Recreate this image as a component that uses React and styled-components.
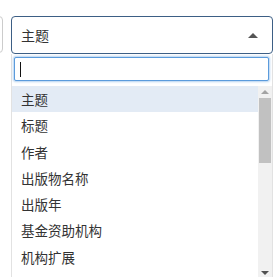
import React from 'react';
import styled, { createGlobalStyle } from 'styled-components';

const GlobalStyle = createGlobalStyle`
  html, body {
    margin: 0;
    padding: 0;
    background: #fff;
    overflow: hidden;
    font-family: "Noto Sans CJK SC", "Noto Sans", sans-serif;
  }
`;

const Page = styled.div`
  padding-top: 16px;
  width: 280px;
  height: 277px;
  box-sizing: border-box;
  overflow: hidden;
`;

const FieldRow = styled.div`
  display: flex;
  gap: 8px;
  margin-left: -60px;
  margin-right: 7px;
`;

// 왼쪽에 잘려서 보이는 이전 필드
const PrevField = styled.div`
  width: 63px;
  height: 37px;
  border: 1px solid #ccc;
  border-radius: 4px;
  box-sizing: border-box;
`;

const SelectWrap = styled.div`
  position: relative;
  flex: 1;
`;

const SelectBox = styled.div`
  display: flex;
  align-items: center;
  justify-content: space-between;
  height: 38px;
  box-sizing: border-box;
  padding: 0 14px 0 9px;
  border: 1px solid #3d5f85;
  border-radius: 4px;
  color: #333;
  font-size: 14px;
`;

const Arrow = styled.span`
  width: 0;
  height: 0;
  border-left: 5px solid transparent;
  border-right: 5px solid transparent;
  border-bottom: 5px solid #555;
`;

const Dropdown = styled.div`
  position: absolute;
  top: 38px;
  left: 0;
  right: 0;
  background: #fff;
  border: 1px solid #e2e2e2;
  border-top: none;
  box-sizing: border-box;
`;

const SearchArea = styled.div`
  position: relative;
  padding: 3px 3px 5px 2px;
`;

const SearchInput = styled.input`
  display: block;
  width: 100%;
  height: 24px;
  box-sizing: border-box;
  border: 1px solid #5b9bdc;
  border-radius: 2px;
  box-shadow: 0 0 2px 1px rgba(91, 155, 220, 0.45);
  outline: none;
  font-size: 14px;
  padding: 0 6px;
`;

const Caret = styled.span`
  position: absolute;
  left: 8px;
  top: 8px;
  width: 1px;
  height: 15px;
  background: #111;
`;

const ResultsArea = styled.div`
  display: flex;
  height: 193px;
`;

const Results = styled.ul`
  flex: 1;
  list-style: none;
  margin: 0;
  padding: 0;
  overflow: hidden;
`;

const Option = styled.li`
  height: 26.3px;
  line-height: 26.3px;
  padding: 0 9px;
  font-size: 13.5px;
  color: #333;
  background: ${(props) => (props.active ? '#e3ebf5' : '#fff')};
  white-space: nowrap;
`;

// 스크롤바 (화살표 + 트랙 + 썸)
const ScrollBar = styled.div`
  display: flex;
  flex-direction: column;
  width: 14px;
  background: #f1f1f1;
`;

const ScrollBtn = styled.div`
  display: flex;
  align-items: center;
  justify-content: center;
  height: 12px;
`;

const ScrollArrow = styled.span`
  width: 0;
  height: 0;
  border-left: 4px solid transparent;
  border-right: 4px solid transparent;
  ${(props) =>
    props.down
      ? `border-top: 4px solid ${props.color};`
      : `border-bottom: 4px solid ${props.color};`}
`;

const Track = styled.div`
  flex: 1;
  padding: 0 1px 0 1px;
`;

const Thumb = styled.div`
  height: 65px;
  background: #c1c1c1;
`;

const fields = [
  '主题',
  '标题',
  '作者',
  '出版物名称',
  '出版年',
  '基金资助机构',
  '机构扩展',
];

const App = () => {
  return (
    <Page>
      <GlobalStyle />
      <FieldRow>
        <PrevField />
        <SelectWrap>
          <SelectBox>
            <span>主题</span>
            <Arrow />
          </SelectBox>
          <Dropdown>
            <SearchArea>
              <SearchInput type="text" />
              <Caret />
            </SearchArea>
            <ResultsArea>
              <Results>
                {fields.map((item, index) => (
                  <Option key={item} active={index === 0}>
                    {item}
                  </Option>
                ))}
              </Results>
              <ScrollBar>
                <ScrollBtn>
                  <ScrollArrow color="#a3a3a3" />
                </ScrollBtn>
                <Track>
                  <Thumb />
                </Track>
                <ScrollBtn>
                  <ScrollArrow down color="#505050" />
                </ScrollBtn>
              </ScrollBar>
            </ResultsArea>
          </Dropdown>
        </SelectWrap>
      </FieldRow>
    </Page>
  );
};

export default App;
